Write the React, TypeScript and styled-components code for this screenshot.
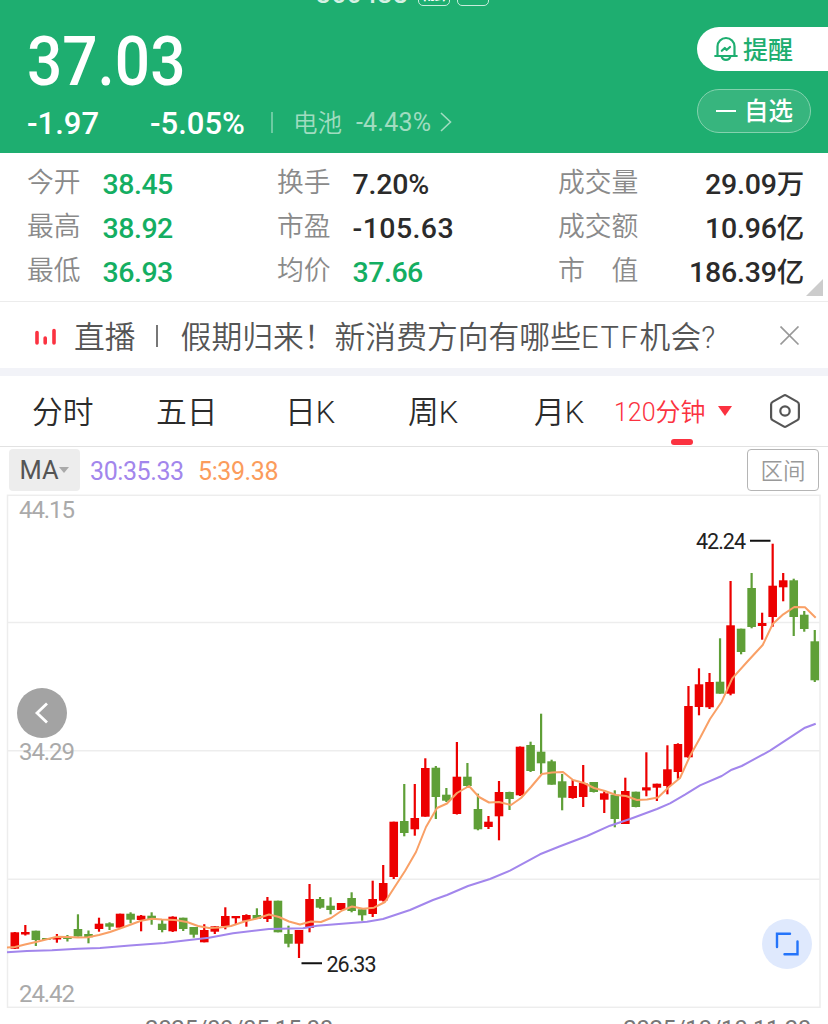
import React from 'react';
import styled, { createGlobalStyle } from 'styled-components';

const GREEN = '#1eae70';
const RED = '#fb3240';

const stats = [
  [
    { label: '今开', value: '38.45', tone: 'down' },
    { label: '最高', value: '38.92', tone: 'down' },
    { label: '最低', value: '36.93', tone: 'down' },
  ],
  [
    { label: '换手', value: '7.20%', tone: 'flat' },
    { label: '市盈', value: '-105.63', tone: 'flat' },
    { label: '均价', value: '37.66', tone: 'down' },
  ],
  [
    { label: '成交量', value: '29.09', unit: '万', tone: 'flat' },
    { label: '成交额', value: '10.96', unit: '亿', tone: 'flat' },
    { label: '市　值', value: '186.39', unit: '亿', tone: 'flat' },
  ],
];

const periods = [
  { name: '分时', width: 124 },
  { name: '五日', width: 129 },
  { name: '日K', width: 123 },
  { name: '周K', width: 126 },
  { name: '月K', width: 80 },
];

// [direction, wick top, body top, body bottom, wick bottom]
type Candle = ['r' | 'g', number, number, number, number];
const candles: Candle[] = [
  ['r', 932, 932.3, 948.7, 949],
  ['r', 925, 932, 934.5, 935.5],
  ['g', 930.7, 930.7, 940, 946],
  ['g', 938, 938, 940, 940],
  ['r', 934, 937, 939.5, 942.7],
  ['g', 935, 937.3, 939, 941.5],
  ['g', 914.3, 929, 936.5, 936.5],
  ['g', 930.5, 934, 937.3, 943.3],
  ['r', 917.7, 923.7, 929, 931.7],
  ['g', 922.3, 923.3, 926.7, 930],
  ['r', 913.7, 913.7, 927.7, 927.7],
  ['g', 912.3, 913.7, 919.7, 923.3],
  ['r', 915, 915.7, 920, 931.3],
  ['g', 912.3, 915.7, 919.3, 924.7],
  ['g', 920, 923.7, 930, 932.3],
  ['r', 916.3, 916.7, 931.3, 932],
  ['g', 917.7, 917.7, 929, 931],
  ['g', 927, 927, 934.7, 937.7],
  ['r', 924.2, 930, 942.3, 942.3],
  ['r', 926, 926.3, 931.7, 934],
  ['r', 907.3, 916, 926, 929.3],
  ['r', 916, 916, 918.3, 924.7],
  ['r', 914.3, 915, 920.7, 926.7],
  ['g', 908.3, 915, 919, 919],
  ['r', 897, 900.7, 919, 922],
  ['g', 900.7, 900.7, 932.3, 932.3],
  ['g', 925.7, 934, 943.7, 947.3],
  ['r', 930, 930, 943.7, 958],
  ['r', 884, 899, 928, 932.3],
  ['g', 897, 899, 907.7, 908.7],
  ['g', 897.3, 905.7, 910, 914.3],
  ['r', 903, 903, 910, 910],
  ['g', 892.3, 898, 911, 912.3],
  ['g', 909.3, 909.3, 915.3, 920.7],
  ['r', 880.7, 899, 914, 917],
  ['r', 865, 883, 900.7, 901.5],
  ['r', 821.7, 821.7, 877, 879],
  ['g', 784, 821, 833, 836.3],
  ['r', 784, 818, 829.3, 835.7],
  ['r', 758.3, 768, 816.7, 816.7],
  ['g', 766, 767.7, 797, 819],
  ['g', 788, 794.7, 800.7, 802],
  ['r', 742, 776.7, 814, 814.5],
  ['g', 763, 776.7, 786, 787.5],
  ['g', 793.7, 809, 829.3, 830.3],
  ['r', 816, 821.7, 827, 829],
  ['r', 781, 792, 816.3, 840.3],
  ['g', 791.7, 792, 799, 810],
  ['r', 746.5, 746.7, 795.3, 796],
  ['g', 741.7, 745, 771, 772],
  ['g', 713.7, 751.7, 763.3, 774],
  ['g', 759.7, 761.3, 784.7, 784.7],
  ['g', 774, 781.3, 797.7, 810.3],
  ['r', 780, 786, 798, 798.7],
  ['r', 765, 783, 797, 807],
  ['g', 782, 782, 792, 792.5],
  ['r', 791.3, 793.3, 799.7, 813],
  ['g', 790.3, 794.7, 819, 827.3],
  ['r', 777.7, 791, 824, 824],
  ['g', 791.7, 791.7, 807, 807.3],
  ['r', 752.3, 787.3, 790.5, 796.3],
  ['r', 783.7, 783.7, 787.7, 801],
  ['r', 745.3, 769.3, 786, 794.3],
  ['r', 743.3, 744, 772, 778.7],
  ['r', 686, 706, 757.3, 758],
  ['r', 668.3, 684.3, 707, 715.3],
  ['r', 673, 682, 707.3, 709],
  ['g', 638.3, 681.7, 693.7, 693.7],
  ['r', 581, 625.3, 693.7, 695.3],
  ['g', 628.7, 628.7, 652, 654.3],
  ['g', 573, 588, 627, 628.3],
  ['r', 612.7, 623, 626, 639.7],
  ['r', 543.7, 585.7, 617, 626.7],
  ['r', 573, 580.3, 587.3, 601.3],
  ['g', 578.7, 580.3, 617, 636],
  ['g', 611, 614.7, 629, 631.7],
  ['g', 630, 641.3, 680.3, 682],
];

const ma5 =
  '7,947.5 15,947 25,944.5 36,942 46,939.5 57,936.7 67,937 78,937.6 88,937.3 99,935 110,932 120,928.5 131,924.5 141,920.7 152,918.8 162,919.5 175,920 187,922 198,926 209,928 220,927.5 231,926 246,921 257,918.5 269,914.5 279,917 289,921.5 300,924.5 311,921.5 321,922 331,918 342,910.5 352,906.5 363,908.7 374,907.7 385,902 394,888 405,871 416,852 426,827 437,808 447,803.5 457,793 469,786 479,797 489,802.5 499,802 511,805 521,798 531,787 542,774 552,772.5 563,772 573,780 584,783 594,788 605,791 616,795 626,796 637,800 647,799.5 658,797.5 669,787 680,778 690,756 700,738 710,719 721.7,701.7 732.3,678.3 747,662 762.7,645 772.7,624 783.3,614.3 794.3,607 805,607.3 815.7,617.7';

const ma30 =
  '7,952.3 27,951 52,950.3 78,948.7 100,948 130,945.5 164,943 185,940.5 209,937.7 233,933.3 269,929 303,928.3 317,925.7 367,921.7 383,919 410,910 433,900 447,895 468,886 490,879 510,870.7 540,854.3 560,846.3 587,836 610,825.7 630,819 657,809 670,803.3 685,794.7 700,785.3 721.7,776 731.7,769.7 741.7,766 770,750.7 805,727.7 815.7,723.7';

const CHART_TOP = 494;

function KLineChart() {
  return (
    <ChartSvg viewBox={`0 ${CHART_TOP} 828 515`} width="828" height="515">
      <g fill="none" stroke="#ededed" strokeWidth="1.5">
        <rect x="7.5" y="495.3" width="812.5" height="512" />
        <path d="M7 622.5H820M7 750.8H820M7 879.3H820" />
      </g>
      {candles.map(([dir, high, top, bottom, low], i) => {
        const x = 14.8 + i * 10.526;
        const color = dir === 'r' ? '#ec0000' : '#5f9f37';
        return (
          <g key={i} fill={color}>
            <rect x={x - 1.1} y={high} width="2.2" height={low - high} />
            <rect x={x - 4.3} y={top} width="8.6" height={bottom - top} />
          </g>
        );
      })}
      <g fill="none" strokeWidth="2" strokeLinejoin="round">
        <polyline points={ma30} stroke="#a286ec" />
        <polyline points={ma5} stroke="#f9a066" />
      </g>
      <path d="M750 540.7H770.5M301.5 963.2H322" stroke="#111" strokeWidth="2" />
      <PriceMark x="696" y="549">42.24</PriceMark>
      <PriceMark x="326.5" y="971.5">26.33</PriceMark>
      <AxisLabel x="19" y="518">44.15</AxisLabel>
      <AxisLabel x="19" y="760">34.29</AxisLabel>
      <AxisLabel x="19" y="1002">24.42</AxisLabel>
    </ChartSvg>
  );
}

function App() {
  return (
    <Page>
      <GlobalStyle />
      <Header>
        <CodeRow>
          <Code>300438</Code>
          <Badge>融</Badge>
          <Badge />
        </CodeRow>
        <Quote>
          <Price>37.03</Price>
          <ChangeRow>
            <Change $width={123}>-1.97</Change>
            <Change $width={121}>-5.05%</Change>
            <Divider />
            <Sector>电池</Sector>
            <SectorChange>-4.43%</SectorChange>
            <svg width="14" height="22" viewBox="0 0 14 22" fill="none" stroke="#a0dcc0" strokeWidth="1.6">
              <path d="M2 2l9.5 9L2 20" />
            </svg>
          </ChangeRow>
        </Quote>
        <Actions>
          <RemindButton>
            <svg width="26" height="26" viewBox="0 0 26 26" fill="none" stroke={GREEN} strokeWidth="2.2" strokeLinecap="round" strokeLinejoin="round">
              <path d="M4.500 19.500V10.500a8.500 8.500 0 0 1 17 0v9M2.200 20h21.600M8.800 21a4.300 3.600 0 0 0 8.400 0" />
              <path d="M8.800 14.800l3-2.800 1.800 2 3.400-3" />
            </svg>
            <ButtonText>提醒</ButtonText>
          </RemindButton>
          <WatchButton>
            <Minus />
            <ButtonText>自选</ButtonText>
          </WatchButton>
        </Actions>
      </Header>

      <Stats>
        {stats.map((column, i) => (
          <StatColumn key={i}>
            {column.map((item) => (
              <Stat key={item.label}>
                <StatLabel>{item.label}</StatLabel>
                <StatValue $down={item.tone === 'down'} $signed={item.value.startsWith('-')}>
                  {item.value}
                  {'unit' in item && <Unit>{item.unit}</Unit>}
                </StatValue>
              </Stat>
            ))}
          </StatColumn>
        ))}
        <Corner />
      </Stats>

      <Banner>
        <svg width="22" height="18" viewBox="0 0 22 18" stroke={RED} strokeWidth="3.6" strokeLinecap="round">
          <path d="M2 5.500v10.500M10.200 11v5M19 3.500v12.500" />
        </svg>
        <Live>直播</Live>
        <LiveBar />
        <Headline>
          假期归来！新消费方向有哪些<Latin>ETF</Latin>机会?
        </Headline>
        <svg width="20" height="20" viewBox="0 0 20 20" stroke="#999" strokeWidth="1.7">
          <path d="M.5 .5l18 18M18.500 .5l-18 18" />
        </svg>
      </Banner>

      <Tabs>
        {periods.map((p) => (
          <Tab key={p.name} $width={p.width}>
            {p.name}
          </Tab>
        ))}
        <ActiveTab>
          <ButtonText>120分钟</ButtonText>
          <Caret />
        </ActiveTab>
        <svg width="32" height="36" viewBox="0 0 32 36" fill="none" stroke="#555" strokeWidth="2.2" strokeLinejoin="round">
          <path d="M14.600 2.600q1.400-.8 2.800 0l11 6.300q1.500.8 1.500 2.500v13.200q0 1.700-1.500 2.500l-11 6.300q-1.400.8-2.800 0l-11-6.300q-1.500-.8-1.500-2.500V11.400q0-1.700 1.500-2.500z" />
          <circle cx="16" cy="18" r="4.700" />
        </svg>
      </Tabs>

      <Indicators>
        <MaButton>
          MA
          <SmallCaret />
        </MaButton>
        <MaValue $color="#a286ec" $width={108}>30:35.33</MaValue>
        <MaValue $color="#fb9c5c" $width={100}>5:39.38</MaValue>
        <RangeButton>区间</RangeButton>
      </Indicators>

      <Chart>
        <KLineChart />
        <BackButton>
          <svg width="16" height="24" viewBox="0 0 16 24" fill="none" stroke="#fff" strokeWidth="2.8">
            <path d="M13 2.500L3 12l10 9.500" />
          </svg>
        </BackButton>
        <ExpandButton>
          <svg width="24" height="24" viewBox="0 0 24 24" fill="none" stroke="#2474fa" strokeWidth="2.4" strokeLinecap="round">
            <path d="M2 15V1.700h13M22.500 9.500v12.800H9.500" />
          </svg>
        </ExpandButton>
      </Chart>
      <Dates>
        <span>2025/09/05 15:00</span>
        <span>2025/10/10 11:30</span>
      </Dates>
    </Page>
  );
}

export default App;

const GlobalStyle = createGlobalStyle`
  *,
  *::before,
  *::after {
    margin: 0;
    padding: 0;
    box-sizing: border-box;
  }
  body {
    background: #fff;
    font-family: Roboto, 'Noto Sans CJK SC', sans-serif;
  }
  svg {
    display: block;
    flex-shrink: 0;
  }
  button {
    border: none;
    font-family: inherit;
  }
`;

const Page = styled.main`
  width: 828px;
  height: 1024px;
  overflow: hidden;
  display: flex;
  flex-direction: column;
  white-space: nowrap;
`;

const Header = styled.header`
  height: 153px;
  flex-shrink: 0;
  background: ${GREEN};
  color: #fff;
  display: grid;
  grid-template-columns: 1fr 131px;
  grid-template-rows: 8px 1fr;
`;
const CodeRow = styled.div`
  grid-column: 1 / 3;
  display: flex;
  align-items: flex-end;
  padding-left: 316px;
  padding-bottom: 2px;
  gap: 7px;
  overflow: hidden;
`;
const Code = styled.span`
  width: 95px;
  font-size: 26px;
  line-height: 24px;
  font-weight: 500;
  letter-spacing: 0.6px;
  color: #d6f1e4;
`;
const Badge = styled.span`
  width: 32px;
  height: 32px;
  flex-shrink: 0;
  border: 1.5px solid #c8ecdb;
  border-radius: 5px;
  font-size: 23px;
  line-height: 34px;
  font-weight: 500;
  text-align: center;
`;
const Quote = styled.div`
  padding-left: 27px;
`;
/* digits are slightly condensed, like a DIN numeral face */
const Price = styled.div`
  height: 90px;
  padding-top: 16px;
  font-size: 69px;
  line-height: 76px;
  font-weight: 500;
  transform: scaleX(0.9);
  transform-origin: left;
`;
const ChangeRow = styled.div`
  display: flex;
  align-items: center;
  height: 48px;
`;
const Change = styled.span<{ $width: number }>`
  width: ${(p) => p.$width}px;
  padding-top: 2px;
  font-size: 31px;
  font-weight: 500;
`;
const Divider = styled.i`
  width: 2px;
  height: 21px;
  margin-right: 20px;
  background: #6ccba2;
`;
const Sector = styled.span`
  width: 63px;
  padding-bottom: 2px;
  font-size: 24.5px;
  font-weight: 350;
  color: #a0dcc0;
`;
const SectorChange = styled.span`
  width: 83px;
  font-size: 25px;
  letter-spacing: 0.2px;
  color: #a0dcc0;
`;
const Actions = styled.div`
  display: flex;
  flex-direction: column;
  align-items: flex-start;
  gap: 18px;
  padding-top: 19px;
`;
const RemindButton = styled.button`
  width: 131px;
  height: 44px;
  padding-left: 16px;
  display: flex;
  align-items: center;
  gap: 4px;
  border-radius: 22px 0 0 22px;
  background: #fff;
  color: ${GREEN};
  font-size: 25px;
  font-weight: 500;
`;
const WatchButton = styled.button`
  width: 114px;
  height: 44px;
  padding-left: 18px;
  display: flex;
  align-items: center;
  gap: 8px;
  border: 1.5px solid #84d2ae;
  border-radius: 22px;
  background: #37b57e;
  color: #fff;
  font-size: 24.5px;
  font-weight: 500;
`;
const ButtonText = styled.span`
  padding-bottom: 3px;
`;
const Minus = styled.i`
  width: 20px;
  height: 2.5px;
  background: #fff;
`;

const Stats = styled.section`
  position: relative;
  height: 149px;
  flex-shrink: 0;
  padding: 9px 24px 0 27px;
  display: grid;
  grid-template-columns: 250px 281px 1fr;
  border-bottom: 1.5px solid #ececec;
`;
const StatColumn = styled.div`
  display: grid;
  grid-template-columns: auto 1fr;
  grid-auto-rows: 44.2px;
  column-gap: 22px;
  &:last-of-type {
    text-align: right;
  }
`;
const Stat = styled.div`
  display: contents;
`;
const StatLabel = styled.span`
  font-size: 26.8px;
  line-height: 43px;
  font-weight: 350;
  color: #8a8a8a;
`;
const StatValue = styled.span<{ $down: boolean; $signed: boolean }>`
  font-size: 28.5px;
  line-height: 45px;
  font-weight: 500;
  letter-spacing: ${(p) => (p.$signed ? 0.4 : p.$down ? -0.5 : -0.2)}px;
  color: ${(p) => (p.$down ? '#14ae62' : '#2b2b2b')};
`;
const Unit = styled.span`
  font-size: 27.5px;
  line-height: 1;
`;
const Corner = styled.i`
  position: absolute;
  right: 5px;
  bottom: 5px;
  border-left: 17px solid transparent;
  border-bottom: 17px solid #ccc;
`;

const Banner = styled.section`
  height: 74px;
  flex-shrink: 0;
  padding: 2px 28px 0 35px;
  display: flex;
  align-items: center;
  border-bottom: 8px solid #f2f3f8;
  font-size: 30.8px;
  font-weight: 350;
  color: #555;
`;
const Live = styled.span`
  margin-left: 17px;
  padding-bottom: 3px;
`;
const LiveBar = styled.i`
  width: 2px;
  height: 22px;
  margin: 0 23px 0 20px;
  background: #777;
`;
const Headline = styled.span`
  flex: 1;
  padding-bottom: 3px;
`;
const Latin = styled.span`
  letter-spacing: 1.7px;
`;

const Tabs = styled.nav`
  height: 71px;
  flex-shrink: 0;
  padding-left: 32px;
  display: flex;
  align-items: center;
  border-bottom: 1.5px solid #e2e2e2;
`;
const Tab = styled.span<{ $width: number }>`
  width: ${(p) => p.$width}px;
  padding-bottom: 4px;
  font-size: 30.8px;
  font-weight: 350;
  color: #2b2b2b;
`;
const ActiveTab = styled.span`
  position: relative;
  width: 155px;
  display: flex;
  align-items: center;
  gap: 12px;
  font-size: 25px;
  font-weight: 350;
  color: ${RED};
  &::after {
    content: '';
    position: absolute;
    left: 57px;
    bottom: -14px;
    width: 22px;
    height: 6px;
    border-radius: 3px;
    background: ${RED};
  }
`;
const Caret = styled.i`
  border: 7.5px solid transparent;
  border-top: 10px solid ${RED};
  border-bottom: 0;
`;

const Indicators = styled.section`
  height: 47px;
  flex-shrink: 0;
  padding: 2px 9px 3px;
  display: flex;
  align-items: center;
`;
const MaButton = styled.button`
  width: 71px;
  height: 42px;
  margin-right: 10px;
  padding-right: 1px;
  display: flex;
  align-items: center;
  justify-content: center;
  border-radius: 4px;
  background: #ededed;
  color: #555;
  font-size: 25.5px;
`;
const SmallCaret = styled.i`
  border: 5px solid transparent;
  border-top: 6px solid #aaa;
  border-bottom: 0;
`;
const MaValue = styled.span<{ $color: string; $width: number }>`
  width: ${(p) => p.$width}px;
  padding-top: 2px;
  font-size: 25px;
  letter-spacing: -0.4px;
  color: ${(p) => p.$color};
`;
const RangeButton = styled.button`
  width: 72px;
  height: 42px;
  margin-left: auto;
  padding-bottom: 2px;
  border: 1.5px solid #b5b5b5;
  border-radius: 4px;
  background: #fff;
  color: #999;
  font-size: 22.5px;
  font-weight: 350;
`;

const Chart = styled.section`
  position: relative;
  height: 515px;
  flex-shrink: 0;
`;
const ChartSvg = styled.svg`
  font-family: Roboto, sans-serif;
`;
const PriceMark = styled.text`
  font-size: 21.5px;
  letter-spacing: -1px;
  fill: #222;
`;
const AxisLabel = styled.text`
  font-size: 24px;
  letter-spacing: -1.1px;
  fill: #aaa;
`;
const RoundButton = styled.button`
  position: absolute;
  width: 50px;
  height: 50px;
  border-radius: 50%;
  display: flex;
  align-items: center;
  justify-content: center;
`;
const BackButton = styled(RoundButton)`
  left: 17px;
  top: 194px;
  background: #a3a3a3;
`;
const ExpandButton = styled(RoundButton)`
  left: 762px;
  top: 425px;
  background: #dfe9fd;
`;
const Dates = styled.footer`
  padding: 6px 17px 0 145px;
  display: flex;
  justify-content: space-between;
  font-size: 24px;
  line-height: 28px;
  letter-spacing: -0.35px;
  color: #777;
`;
